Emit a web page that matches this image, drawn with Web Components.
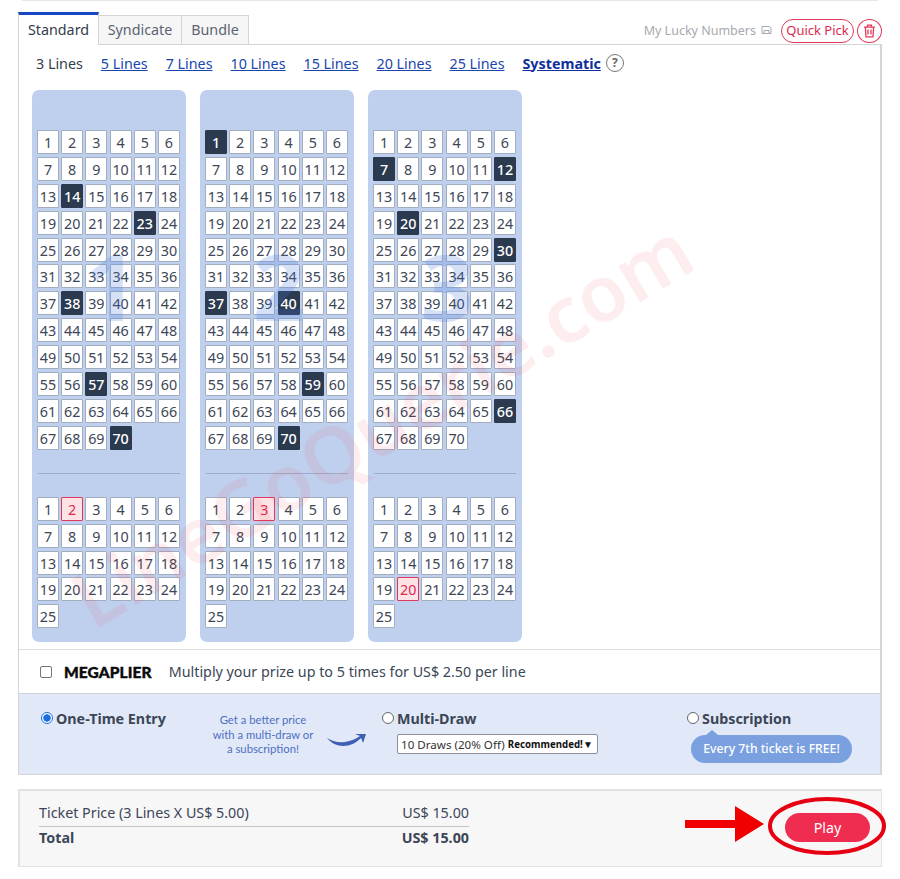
<!DOCTYPE html>
<html>
<head>
<meta charset="utf-8">
<title>Play</title>
<style>
    html, body { margin: 0; padding: 0; background: #fff; }
</style>
</head>
<body>
<lotto-page></lotto-page>
<script>
const FONT = '"Noto Sans", "Open Sans", sans-serif';

class LottoTabs extends HTMLElement {
    constructor() {
        super();
        this.attachShadow({mode: 'open'});
        this.shadowRoot.innerHTML = `
            <style>
                :host { display: flex; align-items: flex-end; height: 32px; margin-top: 11px; font: 14.3px ${FONT}; }
                .tab { box-sizing: border-box; height: 29px; text-align: center; border: 1px solid #d5d5d8; border-left: 0; border-bottom: 0; background: #f6f6f7; color: #5b6470; line-height: 27px; }
                .tab.on { height: 33px; width: 81px; border-top: 3px solid #1748c0; border-left: 1px solid #d5d5d8; background: #fff; color: #333d4c; line-height: 30px; margin-bottom: -1px; position: relative; z-index: 1; }
                .tools { margin-left: auto; display: flex; align-items: center; height: 24px; margin-bottom: 1px; }
                .lucky { color: #a6a9af; font-size: 12.5px; display: flex; align-items: center; gap: 5px; margin: 0 9px 2px -1px; }
                .pill { box-sizing: border-box; height: 24px; width: 73px; border: 1.5px solid #e2385a; border-radius: 12px; color: #e0284d; font-size: 13px; line-height: 20px; text-align: center; }
                .round { box-sizing: border-box; width: 25px; height: 24px; margin-left: 3px; border: 1.5px solid #e2385a; border-radius: 50%; display: flex; align-items: center; justify-content: center; }
            </style>
            <div class="tab on">Standard</div>
            <div class="tab" style="width:83px">Syndicate</div>
            <div class="tab" style="width:67px">Bundle</div>
            <div class="tools">
                <span class="lucky">My Lucky Numbers
                    <svg width="11" height="10" viewBox="0 0 11 10" fill="none" stroke="#a6a9af" stroke-width="1"><path d="M1 1.5h7.5l1.5 1.5v5.5h-9z"/><path d="M3 8.5v-3h5v3"/></svg>
                </span>
                <span class="pill">Quick Pick</span>
                <span class="round">
                    <svg width="13" height="14" viewBox="0 0 13 14" fill="none" stroke="#e2385a" stroke-width="1.3"><path d="M1 3.2h11M4.5 3V1.2h4V3M2.4 3.4l.6 9.4h7l.6-9.4M5 5.5v5M8 5.5v5"/></svg>
                </span>
            </div>
        `;
    }
}
customElements.define('lotto-tabs', LottoTabs);

class LottoLines extends HTMLElement {
    constructor() {
        super();
        this.attachShadow({mode: 'open'});
        const links = ['5 Lines', '7 Lines', '10 Lines', '15 Lines', '20 Lines', '25 Lines'];
        this.shadowRoot.innerHTML = `
            <style>
                :host { display: flex; align-items: center; gap: 18px; height: 36px; padding-left: 17px; font: 14.3px ${FONT}; color: #333d4c; }
                a { color: #1a45ad; text-decoration: underline; }
                a.sys { color: #0f309c; font-weight: 700; }
                .help { display: inline-block; box-sizing: border-box; width: 18px; height: 18px; margin-left: -13px; border: 1.5px solid #777; border-radius: 50%; color: #666; font-size: 12px; font-weight: 700; line-height: 15px; text-align: center; }
            </style>
            <span>3 Lines</span>
            ${links.map(l => `<a href="#">${l}</a>`).join('')}
            <a class="sys" href="#">Systematic</a>
            <span class="help">?</span>
        `;
    }
}
customElements.define('lotto-lines', LottoLines);

class LottoTicket extends HTMLElement {
    constructor() {
        super();
        this.attachShadow({mode: 'open'});
    }

    grid(count, picked, cls) {
        let cells = '';
        for (let n = 1; n <= count; n++) {
            cells += `<span class="cell ${picked.includes(n) ? cls : ''}">${n}</span>`;
        }
        return `<div class="grid">${cells}</div>`;
    }

    connectedCallback() {
        const main = this.getAttribute('main').split(',').map(Number);
        const bonus = this.getAttribute('bonus').split(',').map(Number);
        this.shadowRoot.innerHTML = `
            <style>
                :host { display: block; position: relative; box-sizing: border-box; width: 154px; height: 552px; padding: 40px 5px 0; background: #bfd0ef; border-radius: 7px; font: 14.3px ${FONT}; color: #3c4656; }
                .grid { display: grid; grid-template-columns: repeat(6, 22px); grid-auto-rows: 24px; column-gap: 2.2px; row-gap: 2.9px; }
                .cell { box-sizing: border-box; background: #fff; border: 1px solid #a3adc0; border-radius: 1px; text-align: center; line-height: 23px; }
                .cell.hit { background: #2c3a50; border-color: #2c3a50; color: #fff; font-weight: 500; }
                .cell.bonus { background: #fde3e6; border-color: #e2385a; color: #e0284d; }
                hr { height: 1px; margin: 23px 1px 23px; border: 0; background: #9babc8; }
                .num { position: absolute; left: 43px; top: 137px; width: 72px; text-align: center; font-size: 92px; font-weight: 700; line-height: 118px; color: rgba(70, 120, 220, .22); pointer-events: none; }
            </style>
            ${this.grid(70, main, 'hit')}
            <hr>
            ${this.grid(25, bonus, 'bonus')}
            <div class="num">${this.getAttribute('index')}</div>
        `;
    }
}
customElements.define('lotto-ticket', LottoTicket);

class LottoMegaplier extends HTMLElement {
    constructor() {
        super();
        this.attachShadow({mode: 'open'});
        this.shadowRoot.innerHTML = `
            <style>
                :host { display: flex; box-sizing: border-box; align-items: center; height: 44px; padding-left: 21px; border-top: 1px solid #ddd; font: 14.3px ${FONT}; color: #3c4656; }
                .box { box-sizing: border-box; width: 12px; height: 12px; border: 1px solid #777; border-radius: 2px; background: #fff; }
                .logo { margin: 0 17px 0 12px; font: 900 15.5px Lato, "Liberation Sans", sans-serif; letter-spacing: .1px; color: #0b0b0b; -webkit-text-stroke: .4px #0b0b0b; }
            </style>
            <span class="box"></span>
            <span class="logo">MEGAPLIER</span>
            <span>Multiply your prize up to 5 times for US$ 2.50 per line</span>
        `;
    }
}
customElements.define('lotto-megaplier', LottoMegaplier);

class LottoEntry extends HTMLElement {
    constructor() {
        super();
        this.attachShadow({mode: 'open'});
        this.shadowRoot.innerHTML = `
            <style>
                :host { display: grid; grid-template-columns: 158px 183px 305px 1fr; box-sizing: border-box; height: 81px; padding: 16px 0 0 22px; background: #e1e9f8; border-top: 1px solid #ccd3e0; font: 14.3px ${FONT}; color: #3c4656; }
                .opt { display: flex; align-items: center; gap: 3px; height: 16px; font-weight: 700; }
                .radio { box-sizing: border-box; flex: none; width: 12px; height: 12px; border: 1px solid #666; border-radius: 50%; background: #fff; }
                .radio.on { border: 1.5px solid #1a6fe0; background: radial-gradient(circle, #1a6fe0 3.4px, #fff 4px); }
                .note { position: relative; margin: 3px 0 0 4px; width: 120px; font: 11.3px/14.5px Lato, sans-serif; color: #4c6fc2; text-align: center; white-space: nowrap; }
                .note svg { position: absolute; left: 124px; top: 18px; }
                .pick { box-sizing: border-box; display: flex; align-items: center; width: 201px; height: 20px; margin: 8px 0 0 15px; padding: 0 3px; background: #fff; border: 1px solid #8a8f99; border-radius: 2px; font-size: 11.6px; color: #333; white-space: nowrap; }
                .pick b { margin-left: 3px; font-size: 9.7px; color: #111; }
                .pick i { margin-left: auto; padding-right: 1px; font-style: normal; font-size: 10px; color: #111; }
                .sub { position: relative; width: 161px; height: 28px; margin: 9px 0 0 4px; background: #7aa0e0; border-radius: 14px; color: #fff; font-size: 12.2px; font-weight: 500; line-height: 28px; text-align: center; white-space: nowrap; }
                .sub::before { content: ""; position: absolute; left: 15px; top: -5px; border: 6px solid transparent; border-top: 0; border-bottom: 5px solid #7aa0e0; }
            </style>
            <div><div class="opt"><span class="radio on"></span>One-Time Entry</div></div>
            <div class="note">Get a better price<br>with a multi-draw or<br>a subscription!
                <svg width="40" height="15" viewBox="0 0 40 15"><path d="M0 7c7 4 12 5 18 4 6-1 11-3 15-6l-5-2 11 0-3 9-2-5c-5 5-11 8-18 8C10 15 4 12 0 7z" fill="#3f5fb5"/></svg>
            </div>
            <div>
                <div class="opt"><span class="radio"></span>Multi-Draw</div>
                <div class="pick">10 Draws (20% Off) <b>Recommended!</b><i>&#9660;</i></div>
            </div>
            <div>
                <div class="opt"><span class="radio"></span>Subscription</div>
                <div class="sub">Every 7th ticket is FREE!</div>
            </div>
        `;
    }
}
customElements.define('lotto-entry', LottoEntry);

class LottoPrice extends HTMLElement {
    constructor() {
        super();
        this.attachShadow({mode: 'open'});
        this.shadowRoot.innerHTML = `
            <style>
                :host { display: flex; box-sizing: border-box; position: relative; height: 78px; margin-top: 14px; padding: 11px 11px 0 19px; background: #f7f7f8; border: 2px solid #e2e2e4; border-bottom-width: 1.5px; border-right-width: 1.5px; font: 14.3px ${FONT}; color: #3c4656; }
                .rows { width: 430px; }
                .row { display: flex; justify-content: space-between; height: 24px; line-height: 22px; }
                .row + .row { border-top: 1.5px solid #c6c6ca; line-height: 22px; font-weight: 700; }
                .play { margin: 11px 0 0 auto; width: 85px; height: 29px; background: #ef2d50; border-radius: 15px; color: #fff; line-height: 29px; text-align: center; }
                svg { position: absolute; left: 664px; top: 4px; }
            </style>
            <div class="rows">
                <div class="row"><span>Ticket Price (3 Lines X US$ 5.00)</span><span>US$ 15.00</span></div>
                <div class="row"><span>Total</span><span>US$ 15.00</span></div>
            </div>
            <div class="play">Play</div>
            <svg width="206" height="64" viewBox="0 0 206 64" fill="none">
                <path d="M1 25h50V11l29 18-29 18V33H1z" fill="#f00000"/>
                <ellipse cx="143" cy="31" rx="57" ry="27" stroke="#e60012" stroke-width="4"/>
            </svg>
        `;
    }
}
customElements.define('lotto-price', LottoPrice);

class LottoPage extends HTMLElement {
    constructor() {
        super();
        this.attachShadow({mode: 'open'});
        this.shadowRoot.innerHTML = `
            <style>
                :host { display: block; position: relative; height: 879px; overflow: hidden; }
                .top { height: 1px; margin: 0 22px; background: #e6e6e6; }
                .wrap { margin: 0 18px; width: 864px; }
                .box { border: 1px solid #d5d5d8; border-right-width: 2px; box-sizing: border-box; width: 864px; }
                .tickets { display: flex; align-items: flex-start; gap: 14px; height: 568px; padding: 9px 0 0 13px; box-sizing: border-box; }
                .mark { position: absolute; left: 90px; top: 563px; transform-origin: 0 80%; transform: rotate(-31deg); font: 600 78px/78px "Noto Sans", sans-serif; color: rgba(240, 50, 70, .09); white-space: nowrap; pointer-events: none; }
            </style>
            <div class="top"></div>
            <div class="wrap">
                <lotto-tabs></lotto-tabs>
                <div class="box">
                    <lotto-lines></lotto-lines>
                    <div class="tickets">
                        <lotto-ticket index="1" main="14,23,38,57,70" bonus="2"></lotto-ticket>
                        <lotto-ticket index="2" main="1,37,40,59,70" bonus="3"></lotto-ticket>
                        <lotto-ticket index="3" main="7,12,20,30,66" bonus="20"></lotto-ticket>
                    </div>
                    <lotto-megaplier></lotto-megaplier>
                    <lotto-entry></lotto-entry>
                </div>
                <lotto-price></lotto-price>
            </div>
            <div class="mark">LineGoQuerie.com</div>
        `;
    }
}
customElements.define('lotto-page', LottoPage);
</script>
</body>
</html>
